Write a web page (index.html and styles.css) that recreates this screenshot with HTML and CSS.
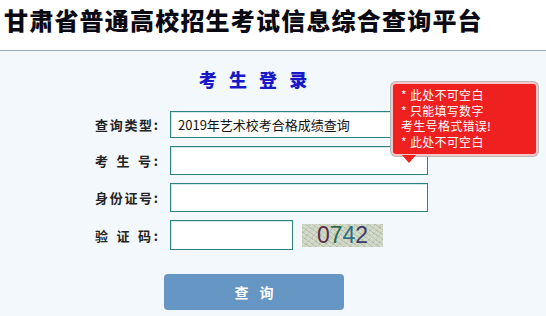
FILE: index.html
```html
<!DOCTYPE html>
<html lang="zh-CN">
<head>
<meta charset="utf-8">
<title>甘肃省普通高校招生考试信息综合查询平台</title>
<link rel="stylesheet" href="styles.css">
</head>
<body>
<header class="top">
  <h1 class="site-title">甘肃省普通高校招生考试信息综合查询平台</h1>
</header>
<main class="main">
  <h2 class="login-title">考 生 登 录</h2>
  <form class="login-form">
    <div class="row">
      <label class="label">查询类型:</label>
      <select class="field select">
        <option>2019年艺术校考合格成绩查询</option>
      </select>
    </div>
    <div class="row">
      <label class="label">考 生 号:</label>
      <input class="field" type="text">
    </div>
    <div class="row">
      <label class="label">身份证号:</label>
      <input class="field" type="text">
    </div>
    <div class="row">
      <label class="label">验 证 码:</label>
      <input class="field short" type="text">
      <div class="captcha"><span class="d1">0</span><span class="d2">7</span><span class="d3">4</span><span class="d4">2</span></div>
    </div>
    <button class="submit" type="button">查 询</button>
  </form>
  <div class="tip">
    <div>* 此处不可空白</div>
    <div>* 只能填写数字</div>
    <div>考生号格式错误!</div>
    <div>* 此处不可空白</div>
  </div>
</main>
</body>
</html>
```

FILE: styles.css
```css
html, body {
  margin: 0;
  padding: 0;
  height: 100%;
}
body {
  font-family: "Noto Sans CJK SC", "Noto Sans", sans-serif;
  background: #f3f8fd;
  overflow: hidden;
}
.top {
  background: #ffffff;
  height: 50px;
  border-bottom: 1px solid #97a9bb;
  box-sizing: content-box;
}
.site-title {
  margin: 0;
  padding: 5px 0 0 4px;
  font-size: 24px;
  line-height: 30px;
  font-weight: 900;
  color: #0a0a14;
  letter-spacing: 1.2px;
}
.main {
  position: relative;
}
.login-title {
  margin: 16px 0 0 150px;
  width: 206px;
  text-align: center;
  font-size: 18px;
  line-height: 24px;
  font-weight: 900;
  color: #1818c8;
  letter-spacing: 4px;
  padding-left: 4px;
  box-sizing: border-box;
}
.login-form {
  margin: 20px 0 0 95px;
  display: flex;
  flex-direction: column;
  gap: 8px;
}
.row {
  display: flex;
  align-items: center;
  gap: 12px;
}
.label {
  width: 63px;
  font-size: 13px;
  font-weight: 700;
  color: #222;
  text-align: justify;
  text-align-last: justify;
  white-space: nowrap;
}
.field {
  box-sizing: border-box;
  width: 258px;
  height: 29px;
  margin: 0;
  border: 1px solid #2b8282;
  box-shadow: inset 1px 1px 0 #d6e8e8;
  background: #fff;
  font-family: "Noto Sans CJK SC", sans-serif;
  font-size: 13px;
  outline: none;
}
.select {
  appearance: none;
  -webkit-appearance: none;
  height: 27px;
  padding: 0 0 0 7px;
  color: #111;
  border-radius: 0;
}
.short {
  width: 123px;
  height: 30px;
}
.captcha {
  margin-left: -3px;
  width: 81px;
  height: 23px;
  display: flex;
  justify-content: center;
  align-items: center;
  font-family: "Liberation Sans", sans-serif;
  font-size: 23px;
  letter-spacing: 0;
  background:
    repeating-linear-gradient(35deg, rgba(140,160,120,0.35) 0 1px, transparent 1px 4px),
    repeating-linear-gradient(-50deg, rgba(170,180,150,0.35) 0 1px, transparent 1px 5px),
    #d3dacb;
}
.d1 { color: #5b2f45; }
.d2 { color: #2d6a52; }
.d3 { color: #2a6f85; }
.d4 { color: #3b3d68; }
.submit {
  margin: 16px 0 0 69px;
  width: 180px;
  height: 36px;
  border: none;
  border-radius: 4px;
  background: #6596c4;
  color: #fff;
  font-family: "Noto Sans CJK SC", sans-serif;
  font-size: 14px;
  font-weight: 700;
  letter-spacing: 4px;
  padding: 0 0 0 4px;
}
.tip {
  position: absolute;
  left: 391px;
  top: 15px;
  width: 147px;
  height: 74px;
  box-sizing: border-box;
  padding: 3px 0 0 8px;
  background: #ee2020;
  border: 2px solid #f4c6c6;
  border-radius: 5px;
  box-shadow: 0 0 0 1px #b8b8b8;
  color: #fff;
  font-size: 12px;
  line-height: 15.5px;
  letter-spacing: 0.3px;
}
.tip::after {
  content: "";
  position: absolute;
  left: 9px;
  bottom: -9px;
  border-left: 7px solid transparent;
  border-right: 7px solid transparent;
  border-top: 8px solid #ee2020;
}
```
